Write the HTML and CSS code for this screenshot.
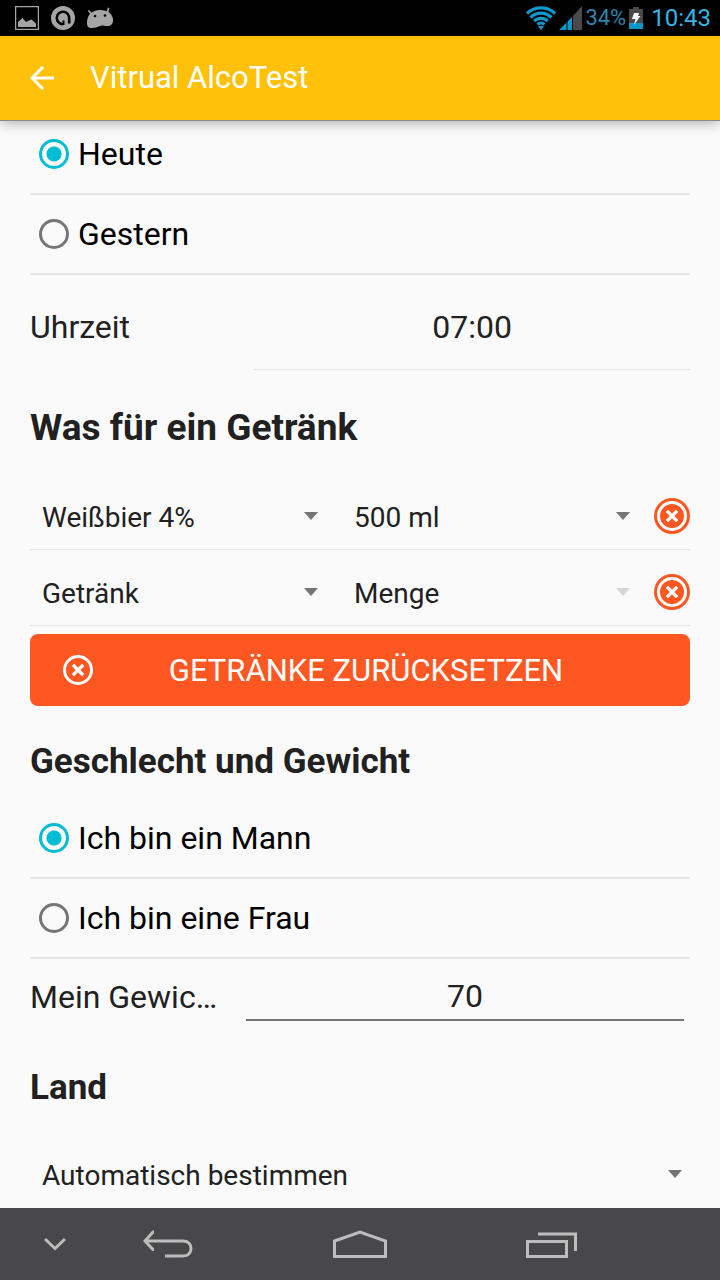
FILE: index.html
```html
<!DOCTYPE html>
<html lang="de">
<head>
<meta charset="utf-8">
<meta name="viewport" content="width=device-width, initial-scale=1">
<title>Vitrual AlcoTest</title>
<link rel="stylesheet" href="styles.css">
</head>
<body>
<svg class="defs" aria-hidden="true">
  <symbol id="cross" viewBox="0 0 30 30">
    <circle cx="15" cy="15" r="13.5" fill="none" stroke="#fff" stroke-width="3"/>
    <path d="M11 11l8 8M19 11l-8 8" fill="none" stroke="#fff" stroke-width="3.2" stroke-linecap="square"/>
  </symbol>
  <symbol id="arrow" viewBox="0 0 14 8">
    <path d="M0 0h14L7 8z" fill="currentColor"/>
  </symbol>
</svg>
<div class="status">
  <div class="status-group">
    <svg width="24" height="24" viewBox="0 0 24 24"><path d="M.6.6h22.8v22.8H.6z" fill="none" stroke="#a5a5a5" stroke-width="1.3"/><path d="M3 21v-5l4.500-4 3.500 4 3-1.500 2.500-1 4.500 4V21z" fill="#a5a5a5"/></svg>
    <svg width="24" height="24" viewBox="0 0 24 24"><circle cx="12" cy="12" r="12" fill="#a5a5a5"/><path d="M12 18.200a6.200 6.200 0 1 1 6.200-6.200v5.500" fill="none" stroke="#000" stroke-width="2.600"/><path d="M12.500 14.500V19" stroke="#000" stroke-width="2"/></svg>
    <svg width="26" height="22" viewBox="0 0 26 22"><path d="M2 4l3 4M21.500 1.500l-1.500 5" stroke="#a5a5a5" stroke-width="1.800" stroke-linecap="round"/><path d="M0 16C0 8 5 3 13 3c8 0 13 4 13 10 0 4-2 6-6 6-4 0-4-1-7 0-3 1-5 2-8 2-4 0-5-2-5-5z" fill="#a5a5a5"/><circle cx="8" cy="9" r="1.300"/><circle cx="18" cy="8.500" r="1.300"/></svg>
  </div>
  <div class="status-group status-right">
    <svg width="30" height="24" viewBox="0 0 30 24" fill="none" stroke="#0c98cb" stroke-width="3.200"><path d="M1 7.500a20.500 20.500 0 0 1 28 0M4.500 11.500a15 15 0 0 1 21 0M8.200 15.200a9.800 9.800 0 0 1 13.600 0M11.500 18.500a5 5 0 0 1 7 0"/><path d="M12 20.800q3-2 6 0L15 24z" fill="#0c98cb" stroke="none"/></svg>
    <svg width="23" height="24" viewBox="0 0 23 24"><path d="M0 24L7.500 16.500V24zM8.500 15.500L13 11v13H8.500z" fill="#0c98cb"/><path d="M14 10l9-10v24h-9z" fill="#4a4a4a"/></svg>
    <span class="percent">34%</span>
    <svg width="14" height="22" viewBox="0 0 14 22"><path d="M0 2h4V0h6v2h4v14H0z" fill="#4a4a4a"/><path d="M0 16h14v6H0z" fill="#0c98cb"/><path d="M5 6h5L9 9h2.500L5 18l1.500-6H3z" fill="#fff"/></svg>
    <span class="clock">10:43</span>
  </div>
</div>
<header class="appbar">
  <button class="back" type="button" aria-label="Zurück"><svg width="24" height="24" viewBox="0 0 24 24" fill="none" stroke="#fff" stroke-width="3"><path d="M24 12H2.500M13 1L2 12l11 11"/></svg></button>
  <h1 class="title">Vitrual AlcoTest</h1>
</header>
<main class="content">
  <div class="radios" role="radiogroup" aria-label="Tag">
    <label class="radio-row"><input class="radio" type="radio" name="day" checked>Heute</label>
    <label class="radio-row"><input class="radio" type="radio" name="day">Gestern</label>
  </div>
  <div class="time-row">
    <label for="time">Uhrzeit</label>
    <input class="time" id="time" type="text" value="07:00">
  </div>
  <h2 class="heading heading-large">Was für ein Getränk</h2>
  <div class="drink-row">
    <div class="picker"><select class="select" aria-label="Getränk 1"><option>Weißbier 4%</option></select><svg class="arrow"><use href="#arrow"/></svg></div>
    <div class="picker"><select class="select" aria-label="Menge 1"><option>500 ml</option></select><svg class="arrow"><use href="#arrow"/></svg></div>
    <button class="remove" type="button" aria-label="Entfernen"><svg class="cross"><use href="#cross"/></svg></button>
  </div>
  <div class="drink-row">
    <div class="picker"><select class="select" aria-label="Getränk 2"><option>Getränk</option></select><svg class="arrow"><use href="#arrow"/></svg></div>
    <div class="picker"><select class="select" aria-label="Menge 2" disabled><option>Menge</option></select><svg class="arrow arrow-off"><use href="#arrow"/></svg></div>
    <button class="remove" type="button" aria-label="Entfernen"><svg class="cross"><use href="#cross"/></svg></button>
  </div>
  <button class="reset" type="button"><svg class="cross"><use href="#cross"/></svg><span class="reset-text">GETRÄNKE ZURÜCKSETZEN</span></button>
  <h2 class="heading">Geschlecht und Gewicht</h2>
  <div role="radiogroup" aria-label="Geschlecht">
    <label class="radio-row"><input class="radio" type="radio" name="sex" checked>Ich bin ein Mann</label>
    <label class="radio-row"><input class="radio" type="radio" name="sex">Ich bin eine Frau</label>
  </div>
  <div class="weight-row">
    <label class="weight-label" for="weight">Mein Gewic…</label>
    <input class="weight" id="weight" type="text" inputmode="numeric" value="70">
  </div>
  <h2 class="heading heading-land">Land</h2>
  <div class="picker picker-wide"><select class="select" aria-label="Land"><option>Automatisch bestimmen</option></select><svg class="arrow"><use href="#arrow"/></svg></div>
</main>
<nav class="navbar" aria-label="System">
  <button class="nav-button nav-hide" type="button" aria-label="Ausblenden"><svg width="22" height="14" viewBox="0 0 22 14"><path d="M1 2l10 9.500L21 2"/></svg></button>
  <button class="nav-button" type="button" aria-label="Zurück"><svg width="50" height="28" viewBox="0 0 50 28"><path d="M3 11h37c5 0 8 3 8 7.500S45 26 40 26H22M11 2h-1L2 11l8 8.500h1"/></svg></button>
  <button class="nav-button" type="button" aria-label="Startseite"><svg width="54" height="28" viewBox="0 0 54 28"><path d="M1.500 11L27 2l25.500 9v15.500h-51z"/></svg></button>
  <button class="nav-button" type="button" aria-label="Letzte Apps"><svg width="52" height="28" viewBox="0 0 52 28"><path d="M1.500 11.500h39v15h-39zM12 4h37.500v17"/></svg></button>
</nav>
</body>
</html>
```
FILE: styles.css
```css
* {
  box-sizing: border-box;
}

body {
  margin: 0;
  min-height: 100vh;
  display: flex;
  flex-direction: column;
  background: #fafafa;
  color: #212121;
  font-family: Roboto, "Noto Sans", sans-serif;
  font-size: 32px;
  line-height: 40px;
}

button,
input,
select {
  margin: 0;
  padding: 0;
  border: 0;
  background: none;
  color: inherit;
  font: inherit;
}

svg {
  display: block;
  flex: none;
}

.defs {
  position: absolute;
  width: 0;
  height: 0;
}

.status {
  display: flex;
  justify-content: space-between;
  align-items: center;
  height: 36px;
  padding: 0 9px 0 15px;
  background: #000;
  color: #33b5e5;
}

.status-group {
  display: flex;
  align-items: center;
  gap: 12px;
}

.status-right {
  gap: 3px;
}

.percent {
  color: #2a86aa;
  font-size: 22px;
}

.clock {
  margin-left: 5px;
  font-size: 24px;
}

.appbar {
  position: relative;
  z-index: 1;
  display: flex;
  align-items: center;
  gap: 36px;
  height: 84px;
  padding: 0 30px;
  background: #ffc10a;
  color: #fff;
  box-shadow: 0 1px 0 #888, 0 3px 12px rgba(0, 0, 0, 0.3);
}

.title {
  margin: 0;
  font-size: 31px;
  font-weight: 400;
}

.content {
  flex: 1;
  padding: 0 30px;
}

.radios {
  margin-top: -5px;
}

.radio-row {
  display: flex;
  align-items: center;
  gap: 9px;
  height: 80px;
  padding-left: 9px;
  border-bottom: 2px solid #e6e6e6;
  color: #000;
  line-height: 42px;
}

.radio {
  appearance: none;
  width: 30px;
  height: 30px;
  border: 3px solid #757575;
  border-radius: 50%;
}

.radio:checked {
  border-color: #00bcd4;
  background: radial-gradient(circle, #00bcd4 7px, transparent 8px);
}

.time-row {
  display: flex;
  align-items: stretch;
  justify-content: space-between;
  height: 95px;
  line-height: 104px;
}

.time {
  width: 66%;
  border-bottom: 1px solid #e6e6e6;
  padding-top: 10px;
  text-align: center;
}

.heading {
  margin: 36px 0 17px;
  font-size: 35px;
  font-weight: 700;
  line-height: 40px;
}

.heading-large {
  margin: 38px 0 26px;
  font-size: 37px;
}

.drink-row {
  display: grid;
  grid-template-columns: 1fr 1fr 36px;
  column-gap: 12px;
  align-items: center;
  height: 76px;
  border-bottom: 1px solid #e6e6e6;
  padding-top: 8px;
}

.picker {
  display: grid;
  align-items: center;
}

.select {
  grid-area: 1 / 1;
  appearance: none;
  width: 100%;
  height: 48px;
  padding: 4px 36px 0 12px;
  font-size: 28px;
  opacity: 1;
}

.arrow {
  grid-area: 1 / 1;
  justify-self: end;
  width: 14px;
  height: 8px;
  margin-right: 12px;
  color: #757575;
  pointer-events: none;
}

.arrow-off {
  color: #d6d6d6;
}

.remove {
  display: grid;
  place-items: center;
  width: 36px;
  height: 36px;
  border-radius: 50%;
  background: #ff5722;
}

.cross {
  width: 30px;
  height: 30px;
}

.reset {
  display: flex;
  align-items: center;
  width: 100%;
  height: 72px;
  margin-top: 8px;
  padding: 0 33px;
  border-radius: 8px;
  background: #ff5722;
  color: #fff;
  font-size: 31px;
}

.reset-text {
  flex: 1;
  padding: 2px 18px 0 0;
  text-align: center;
}

.weight-row {
  display: flex;
  justify-content: space-between;
  height: 62px;
  padding-right: 6px;
  line-height: 76px;
}

.weight-label {
  white-space: nowrap;
}

.weight {
  width: 67%;
  border-bottom: 2px solid #757575;
  padding-top: 14px;
  text-align: center;
}

.heading-land {
  margin: 47px 0 42px;
}

.picker-wide .arrow {
  margin-right: 8px;
}

.navbar {
  display: grid;
  grid-template-columns: 72px repeat(3, 1fr) 72px;
  align-items: center;
  height: 72px;
  background: #48484a;
}

.nav-button {
  display: grid;
  place-items: center;
  height: 72px;
}

.nav-hide {
  padding-left: 38px;
}

.nav-button svg {
  fill: none;
  stroke: #bdbdbd;
  stroke-width: 3;
}
```
